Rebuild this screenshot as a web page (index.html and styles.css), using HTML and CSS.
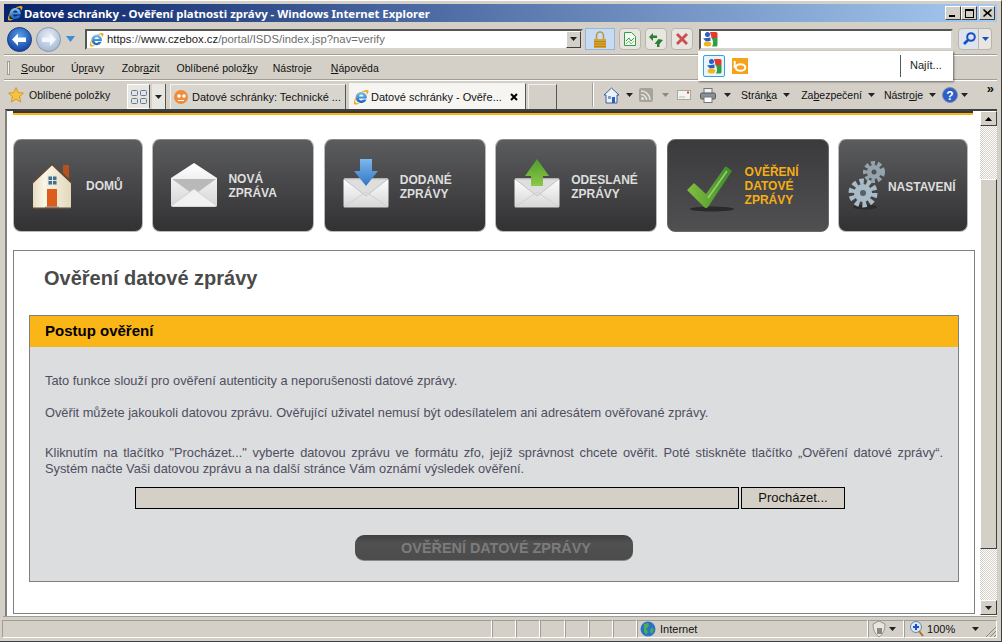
FILE: index.html
```html
<!DOCTYPE html>
<html lang="cs">
<head>
<meta charset="utf-8">
<title>Datové schránky - Ověření platnosti zprávy</title>
<link rel="stylesheet" href="styles.css">
</head>
<body>
<svg class="defs" width="0" height="0" aria-hidden="true">
  <defs>
    <linearGradient id="gIe" x1="0" y1="0" x2="0" y2="1"><stop offset="0" stop-color="#7cc4f4"/><stop offset="1" stop-color="#0f5fc0"/></linearGradient>
    <linearGradient id="gEnv" x1="0" y1="0" x2="0" y2="1"><stop offset="0" stop-color="#ffffff"/><stop offset="1" stop-color="#d6d6d6"/></linearGradient>
    <linearGradient id="gBlue" x1="0" y1="0" x2="0" y2="1"><stop offset="0" stop-color="#7db8ee"/><stop offset="1" stop-color="#2f76c4"/></linearGradient>
    <linearGradient id="gGreen" x1="0" y1="0" x2="0" y2="1"><stop offset="0" stop-color="#4e9c2c"/><stop offset="1" stop-color="#8cc84a"/></linearGradient>
    <linearGradient id="gCheck" x1="0" y1="0" x2="1" y2="0"><stop offset="0" stop-color="#82bf3e"/><stop offset="1" stop-color="#3c8c2e"/></linearGradient>
    <linearGradient id="gHouse" x1="0" y1="0" x2="1" y2="0"><stop offset="0" stop-color="#e6dcc0"/><stop offset=".3" stop-color="#faf6e6"/><stop offset="1" stop-color="#e2d8bc"/></linearGradient>
    <radialGradient id="gBack" cx=".5" cy=".35" r=".7"><stop offset="0" stop-color="#5aa0ea"/><stop offset="1" stop-color="#0a3a9c"/></radialGradient>
    <radialGradient id="gFwd" cx=".5" cy=".35" r=".7"><stop offset="0" stop-color="#e6eef8"/><stop offset="1" stop-color="#9fb4cf"/></radialGradient>
    <symbol id="ie" viewBox="0 0 16 16">
      <path d="M8.300 3C5.200 3 2.700 5.400 2.700 8.500s2.500 5.500 5.600 5.500c2.400 0 4.400-1.400 5.200-3.500h-3.300c-.4.700-1.100 1.100-1.900 1.100-1.200 0-2.200-.9-2.300-2.100h7.700c.1-.4.100-.7.100-1C13.800 5.400 11.400 3 8.300 3zM6 7.500C6.200 6.400 7.100 5.600 8.300 5.600s2.100.8 2.300 1.900z" fill="url(#gIe)"/>
      <path d="M1.200 15C.2 13 2 8 6.500 4.300 10.500 1 14.400.2 15.300 1.600c.6 1-.1 2.500-1.400 4.100.2-1.500-.3-2.700-1.900-3C9.600 2.300 7 3.600 5 6 2.800 8.600 1.800 12 2.600 13.400c.7 1.100 2.800 1 5-.2-2.700 2.300-5.400 3-6.400 1.800z" fill="#f0a820"/>
    </symbol>
    <symbol id="goog" viewBox="0 0 16 16">
      <path d="M8 1h6a1.500 1.500 0 0 1 1.500 1.500V7H9.500z" fill="#e33a2c"/>
      <path d="M9.500 7h6v7a1.500 1.500 0 0 1-1.500 1.500H10c1.500-2 1.500-6-.5-8.500z" fill="#2ea043"/>
      <circle cx="5.500" cy="3.600" r="2.500" fill="#2a5fc0"/>
      <path d="M1 7.500L8.500 6.500v3.500L4 10.500z" fill="#2a5fc0"/>
      <ellipse cx="5.500" cy="13" rx="3.800" ry="2.500" fill="#f2b61c"/>
    </symbol>
    <symbol id="env" viewBox="0 0 46 30">
      <rect x=".5" y=".5" width="45" height="29" rx="1.500" fill="url(#gEnv)"/>
      <path d="M1 1l22 17L45 1z" fill="#dedede" stroke="#c4c4c4" stroke-width="1"/>
      <path d="M1 29l22-15 22 15" fill="none" stroke="#d0d0d0" stroke-width="1"/>
    </symbol>
    <symbol id="tri" viewBox="0 0 7 4"><path d="M0 0h7L3.500 4z" fill="#222"/></symbol>
  </defs>
</svg>

<div class="window">
  <header class="titlebar">
    <svg class="ti-ie"><use href="#ie"/></svg>
    <span class="ti-text">Datové schránky - Ověření platnosti zprávy - Windows Internet Explorer</span>
    <span class="ctrls">
      <button class="ctrl" aria-label="Minimalizovat"><i class="c-min"></i></button>
      <button class="ctrl" aria-label="Maximalizovat"><i class="c-max"></i></button>
      <button class="ctrl c-gap" aria-label="Zavřít">
        <svg viewBox="0 0 9 8" width="9" height="8"><path d="M1 0l3.500 3L8 0l1 1-3 3 3 3-1 1-3.500-3L1 8 0 7l3-3-3-3z" fill="#000"/></svg>
      </button>
    </span>
  </header>

  <nav class="navbar">
    <span class="backfwd">
      <svg viewBox="0 0 25 25" width="25" height="25"><circle cx="12.500" cy="12.500" r="12" fill="url(#gBack)" stroke="#1d3f80"/><path d="M5 12.500l6-6v4h8v4.500h-8v4z" fill="#fff"/></svg>
      <svg class="fwd" viewBox="0 0 25 25" width="25" height="25"><circle cx="12.500" cy="12.500" r="12" fill="url(#gFwd)" stroke="#8a96a8"/><path d="M20 12.500l-6-6v4H6v4.500h8v4z" fill="#f4f7fb"/></svg>
    </span>
    <svg class="navdrop" viewBox="0 0 9 6" width="9" height="6"><path d="M0 0h9L4.500 6z" fill="#3a8fd0"/></svg>
    <div class="addr">
      <svg class="addr-ie"><use href="#ie"/></svg>
      <span class="url"><b>https</b>://<b>www.czebox.cz</b>/portal/ISDS/index.jsp?nav=verify</span>
      <span class="addr-dd"><svg width="7" height="4"><use href="#tri"/></svg></span>
    </div>
    <span class="lock">
      <svg viewBox="0 0 14 17" width="14" height="17"><path d="M3.500 8V4.500a3.500 3.500 0 0 1 7 0V8" fill="none" stroke="#b89a4a" stroke-width="1.600"/><rect x="1" y="8" width="12" height="9" fill="#d9a531"/><path d="M1 10.500h12M1 13h12M1 15.500h12" stroke="#a97c1d" stroke-width=".8"/></svg>
    </span>
    <span class="tbtn t1">
      <svg viewBox="0 0 12 14" width="12" height="14"><path d="M.5.500h7l4 4v9H.5z" fill="#f2fbf0" stroke="#3a9a4a"/><path d="M2 9l3-3 2 3 3-3" fill="none" stroke="#3a9a4a"/><path d="M2 12l3-3 2 3 3-3" fill="none" stroke="#8cc88c"/></svg>
    </span>
    <span class="tbtn">
      <svg viewBox="0 0 16 16" width="16" height="16"><path d="M1 6l4-4v2.500h4V7H5v3z" fill="#2d7d32"/><path d="M15 9l-3.500 4V16H9v-3H6.500l4-5z" fill="#2d7d32"/></svg>
    </span>
    <span class="tbtn">
      <svg viewBox="0 0 12 12" width="12" height="12"><path d="M2 0l4 4 4-4 2 2-4 4 4 4-2 2-4-4-4 4-2-2 4-4-4-4z" fill="#c8504e"/></svg>
    </span>
    <div class="search"><svg class="s-g"><use href="#goog"/></svg></div>
    <span class="s-btn">
      <svg viewBox="0 0 14 14" width="14" height="14"><circle cx="9" cy="5" r="3.800" fill="none" stroke="#1450c8" stroke-width="2"/><path d="M6 8l-4 4" stroke="#1450c8" stroke-width="2.600"/></svg>
    </span>
    <span class="s-arr"><svg viewBox="0 0 7 4" width="7" height="4"><path d="M0 0h7L3.500 4z" fill="#1450c8"/></svg></span>
  </nav>

  <div class="popup">
    <span class="pop-g"><svg width="16" height="16"><use href="#goog"/></svg></span>
    <span class="pop-b"><svg viewBox="0 0 16 16" width="16" height="16"><rect width="16" height="16" fill="#f7a21b"/><ellipse cx="8.500" cy="9.500" rx="4.800" ry="3.300" fill="none" stroke="#fff" stroke-width="2"/><path d="M2.700 3v7" stroke="#fff" stroke-width="2"/></svg></span>
    <span class="pop-find">Najít...</span>
  </div>

  <div class="menubar">
    <i class="grip"></i>
    <span class="m m1"><u>S</u>oubor</span>
    <span class="m m2">Úp<u>r</u>avy</span>
    <span class="m m3">Zobr<u>a</u>zit</span>
    <span class="m m4">Oblíbené polož<u>k</u>y</span>
    <span class="m m5">Nástro<u>j</u>e</span>
    <span class="m m6"><u>N</u>ápověda</span>
  </div>

  <div class="cmdbar">
    <svg class="star" viewBox="0 0 16 16" width="16" height="16"><path d="M8 .5l2.300 5 5.200.6-3.900 3.500 1.100 5.400L8 12.300 3.300 15l1.100-5.400L.5 6.100l5.200-.6z" fill="#f7c23c" stroke="#c98a10" stroke-width=".7"/></svg>
    <span class="fav">Oblíbené položky</span>
    <span class="qt"><svg viewBox="0 0 16 14" width="16" height="14"><g fill="#dfe3ea" stroke="#6a7a90"><rect x=".5" y=".5" width="6" height="5" rx="1"/><rect x="9.500" y=".5" width="6" height="5" rx="1"/><rect x=".5" y="8.500" width="6" height="5" rx="1"/><rect x="9.500" y="8.500" width="6" height="5" rx="1"/></g></svg></span>
    <span class="qd"><svg width="7" height="4"><use href="#tri"/></svg></span>
    <span class="tab">
      <svg viewBox="0 0 14 14" width="14" height="14"><circle cx="7" cy="7" r="7" fill="#ee8c3a"/><circle cx="5" cy="6" r="1.800" fill="#fff"/><circle cx="10" cy="6" r="1.800" fill="#fff"/><path d="M4 10.500h6" stroke="#fff"/></svg>
      <span>Datové schránky: Technické ...</span>
    </span>
    <span class="tab tab-on">
      <svg width="16" height="16"><use href="#ie"/></svg>
      <span>Datové schránky - Ověře...</span>
      <svg class="tabx" viewBox="0 0 8 8" width="8" height="8"><path d="M1 1l6 6M7 1L1 7" stroke="#000" stroke-width="2"/></svg>
    </span>
    <span class="tabnew"></span>
    <i class="sep"></i>
    <svg class="c-home" viewBox="0 0 17 17" width="17" height="17"><path d="M8.500 1L1 8h2v8h11V8h2z" fill="#eef2f8" stroke="#3a5fa0"/><rect x="9" y="10" width="3" height="6" fill="#2a5fc0"/><rect x="5" y="9" width="3" height="3" fill="#7aa0d0"/></svg>
    <svg class="c-a1" width="7" height="4"><use href="#tri"/></svg>
    <svg class="c-rss" viewBox="0 0 14 14" width="14" height="14"><rect width="14" height="14" rx="2" fill="#a6a39a"/><circle cx="3.500" cy="10.500" r="1.500" fill="#e4e2dc"/><path d="M2 6.500a5.500 5.500 0 0 1 5.500 5.500M2 3a9 9 0 0 1 9 9" fill="none" stroke="#e4e2dc" stroke-width="1.600"/></svg>
    <svg class="c-a2" viewBox="0 0 7 4" width="7" height="4"><path d="M0 0h7L3.500 4z" fill="#8a8880"/></svg>
    <svg class="c-mail" viewBox="0 0 14 10" width="14" height="10"><rect x=".5" y=".5" width="13" height="9" fill="#f4f3f0" stroke="#a8a69e"/><rect x="10" y="1.500" width="2" height="2" fill="#d04040"/><path d="M2 7h6" stroke="#bbb"/></svg>
    <svg class="c-print" viewBox="0 0 16 15" width="16" height="15"><rect x="4" y=".5" width="8" height="5" fill="#f2f2f2" stroke="#777"/><rect x=".5" y="5" width="15" height="6" rx="1.500" fill="#8a9098" stroke="#555"/><rect x="4" y="9" width="8" height="5.500" fill="#fff" stroke="#777"/></svg>
    <svg class="c-a3" width="7" height="4"><use href="#tri"/></svg>
    <span class="c-t t-a">Strán<u>k</u>a</span><svg class="c-a4" width="7" height="4"><use href="#tri"/></svg>
    <span class="c-t t-b">Za<u>b</u>ezpečení</span><svg class="c-a4" width="7" height="4"><use href="#tri"/></svg>
    <span class="c-t t-c">Nástr<u>o</u>je</span><svg class="c-a4" width="7" height="4"><use href="#tri"/></svg>
    <svg class="c-help" viewBox="0 0 16 16" width="16" height="16"><circle cx="8" cy="8" r="7.500" fill="#2e5fc8" stroke="#7f8da8"/><text x="8" y="12.500" text-anchor="middle" class="helpq">?</text></svg>
    <svg class="c-a5" width="7" height="4"><use href="#tri"/></svg>
    <span class="more">&raquo;</span>
  </div>

  <div class="mainrow">
    <main class="view">
      <div class="strip"></div>
      <div class="btnrow">
        <a class="nb nb-s">
          <svg class="ic-home" viewBox="0 0 44 48" width="44" height="48">
            <rect x="33" y="4" width="6" height="13" fill="#b9501f"/>
            <path d="M3 21L22 3l19 18v27H3z" fill="url(#gHouse)"/>
            <path d="M2 22L22 3l20 19" fill="none" stroke="#5d4a3a" stroke-width="2"/>
            <rect x="18" y="15" width="9" height="9" fill="#3e6f93" stroke="#e9e4d4"/>
            <path d="M22.500 15v9M18 19.500h9" stroke="#e9e4d4"/>
            <rect x="17" y="28" width="10" height="18" fill="#dc5d1e"/>
            <rect x="15" y="45.500" width="14" height="1.500" fill="#a8a8a8"/>
            <rect x="3" y="46.500" width="38" height="1.500" fill="#5b4b3a"/>
          </svg>
          <span class="nt nt-home">DOMŮ</span>
        </a>
        <a class="nb nb-l">
          <svg class="ic-new" viewBox="0 0 46 44" width="46" height="44">
            <path d="M0 15L23 0l23 15v27a2 2 0 0 1-2 2H2a2 2 0 0 1-2-2z" fill="url(#gEnv)"/>
            <path d="M1 16h44L23 32z" fill="#b9b9b9"/>
            <path d="M0 43l23-17 23 17" fill="#f1f1f1" stroke="#d2d2d2"/>
          </svg>
          <span class="nt nt-new">NOVÁ<br>ZPRÁVA</span>
        </a>
        <a class="nb nb-l">
          <span class="ic-stack">
            <svg class="env" width="46" height="30"><use href="#env"/></svg>
            <svg class="arr" viewBox="0 0 24 27" width="24" height="27"><path d="M6 0h12v12h6L12 27 0 12h6z" fill="url(#gBlue)"/></svg>
          </span>
          <span class="nt nt-rec">DODANÉ<br>ZPRÁVY</span>
        </a>
        <a class="nb nb-l">
          <span class="ic-stack">
            <svg class="env" width="46" height="30"><use href="#env"/></svg>
            <svg class="arr" viewBox="0 0 24 27" width="24" height="27"><path d="M12 0l12 17h-6v10H6V17H0z" fill="url(#gGreen)"/></svg>
          </span>
          <span class="nt nt-sent">ODESLANÉ<br>ZPRÁVY</span>
        </a>
        <a class="nb nb-l nb-on">
          <svg class="ic-check" viewBox="0 0 50 46" width="50" height="46">
            <ellipse cx="25" cy="43" rx="22" ry="2.500" fill="#2a2a2a"/>
            <path d="M0 24l7-7 12 11L38 1q1-1 2 0l5 4-24 36q-2 2-4 0z" fill="url(#gCheck)"/>
            <path d="M21 32L40 5" stroke="#9ccf70" stroke-width="1.500"/>
          </svg>
          <span class="nt nt-ver">OVĚŘENÍ<br>DATOVÉ<br>ZPRÁVY</span>
        </a>
        <a class="nb nb-s">
          <svg class="ic-gear" viewBox="0 0 38 50" width="38" height="50">
            <ellipse cx="17" cy="47" rx="12" ry="2.500" fill="#2b2b2b"/>
            <circle cx="15" cy="33" r="11" fill="none" stroke="#a9bbc6" stroke-width="7" stroke-dasharray="4 2.900"/>
            <circle cx="15" cy="33" r="9" fill="#a9bbc6"/><circle cx="15" cy="33" r="3" fill="#566068"/>
            <circle cx="26" cy="12" r="8" fill="none" stroke="#95a4ac" stroke-width="6" stroke-dasharray="3.500 2.300"/>
            <circle cx="26" cy="12" r="7" fill="#95a4ac"/><circle cx="26" cy="12" r="2.500" fill="#4e5458"/>
          </svg>
          <span class="nt nt-set">NASTAVENÍ</span>
        </a>
      </div>
      <section class="box">
        <h1>Ověření datové zprávy</h1>
        <div class="panel">
          <h2>Postup ověření</h2>
          <div class="pbody">
            <p class="p1">Tato funkce slouží pro ověření autenticity a neporušenosti datové zprávy.</p>
            <p class="p2">Ověřit můžete jakoukoli datovou zprávu. Ověřující uživatel nemusí být odesílatelem ani adresátem ověřované zprávy.</p>
            <p class="p3">Kliknutím na tlačítko "Procházet..." vyberte datovou zprávu ve formátu zfo, jejíž správnost chcete ověřit. Poté stiskněte tlačítko „Ověření datové zprávy“. Systém načte Vaši datovou zprávu a na další stránce Vám oznámí výsledek ověření.</p>
            <div class="filerow"><span class="filein"></span><span class="filebtn">Procházet...</span></div>
            <div class="subrow"><span class="submit">OVĚŘENÍ DATOVÉ ZPRÁVY</span></div>
          </div>
        </div>
      </section>
    </main>
    <aside class="sbar">
      <span class="sb-btn"><svg width="7" height="4" viewBox="0 0 7 4"><path d="M3.500 0L7 4H0z" fill="#000"/></svg></span>
      <span class="sb-track"></span>
      <span class="sb-thumb"></span>
      <span class="sb-track2"></span>
      <span class="sb-btn"><svg width="7" height="4"><use href="#tri"/></svg></span>
    </aside>
  </div>

  <footer class="status">
    <span class="st st-main"></span>
    <span class="st st-s"></span><span class="st st-s"></span><span class="st st-s"></span><span class="st st-s"></span><span class="st st-s"></span><span class="st st-s"></span>
    <span class="st st-zone">
      <svg viewBox="0 0 16 16" width="16" height="16"><circle cx="8" cy="8" r="7.500" fill="#2a72c8"/><path d="M4 3l4-1 1 3-3 3 2 3-2 3-2-4zM11 7l3 1-2 5-2-2z" fill="#4cae4c"/></svg>
      <span>Internet</span>
    </span>
    <span class="st st-sec">
      <svg viewBox="0 0 14 18" width="14" height="18"><path d="M7 1l6 3c0 6-2 10-6 13C3 14 1 10 1 4z" fill="#e8e6e0" stroke="#98958c"/><rect x="5" y="8" width="5" height="6" fill="#8a8880"/></svg>
      <svg width="7" height="4"><use href="#tri"/></svg>
    </span>
    <span class="st st-zoom">
      <svg viewBox="0 0 14 16" width="14" height="16"><circle cx="6" cy="6" r="5.500" fill="#d9e8f8" stroke="#6a86a8"/><path d="M6 3v6M3 6h6" stroke="#1a50c0" stroke-width="2"/><path d="M9 10l4 5" stroke="#b07020" stroke-width="2"/></svg>
      <span>100%</span>
      <svg class="z-a" width="7" height="4"><use href="#tri"/></svg>
    </span>
    <svg class="grip2" viewBox="0 0 12 12" width="12" height="12"><path d="M11 1L1 11M11 5l-6 6M11 9l-2 2" stroke="#8a887f"/></svg>
  </footer>
</div>
</body>
</html>
```
FILE: styles.css
```css
* { box-sizing: border-box; }
html, body { margin: 0; padding: 0; }
body { width: 1002px; height: 642px; overflow: hidden; background: #d4d0c8; font-family: "Liberation Sans", "Noto Sans", sans-serif; font-size: 11px; color: #111; }
.defs { position: absolute; }
svg { display: block; flex: none; }
.window { position: relative; width: 1002px; height: 642px; padding: 4px 4px 3px; display: flex; flex-direction: column; border-top: 1px solid #fff; border-bottom: 1px solid #404040; border-right: 1px solid #404040; }

.titlebar { height: 18px; margin-top: -1px; flex: none; display: flex; align-items: center; background: linear-gradient(90deg, #0a246a, #a6caf0); color: #fff; padding-right: 2px; }
.ti-ie { width: 16px; height: 16px; margin-left: 3px; }
.ti-text { margin-left: 1px; font: bold 11.4px "Noto Sans", sans-serif; white-space: nowrap; }
.ctrls { margin-left: auto; display: flex; }
.ctrl { width: 16px; height: 14px; padding: 0; background: #d4d0c8; border: 1px solid; border-color: #fff #404040 #404040 #fff; display: flex; align-items: center; justify-content: center; position: relative; }
.c-gap { margin-left: 2px; }
.c-min { width: 6px; height: 2px; background: #000; margin-top: 6px; margin-right: 2px; }
.c-max { width: 9px; height: 9px; border: 1px solid #000; border-top-width: 2px; }

.navbar { height: 33px; flex: none; display: flex; align-items: center; padding-top: 2px; border-bottom: 1px solid #a09d94; box-shadow: 0 1px 0 #fff; }
.backfwd { display: flex; margin-left: 3px; gap: 4px; }
.navdrop { margin-left: 5px; }
.addr { width: 498px; height: 21px; margin-left: 10px; background: #fff; border: 2px solid; border-color: #555 #d8d5ce #d8d5ce #555; display: flex; align-items: center; }
.addr-ie { width: 15px; height: 15px; margin-left: 2px; }
.url { margin-left: 3px; font-size: 11.3px; color: #6d6d6d; white-space: nowrap; }
.url b { font-weight: 400; color: #222; }
.addr-dd { margin-left: auto; width: 15px; height: 17px; background: #d4d0c8; border: 1px solid; border-color: #fff #404040 #404040 #fff; display: flex; align-items: center; justify-content: center; }
.lock { width: 30px; height: 22px; margin-left: 2px; background: #c7dcf2; border: 1px solid #9ab6d4; display: flex; align-items: center; justify-content: center; }
.tbtn { width: 22px; height: 22px; margin-left: 4px; background: #e8e6e0; border: 1px solid #b7b5ae; border-radius: 4px; display: flex; align-items: center; justify-content: center; }
.t1 { margin-left: 4px; }
.search { width: 254px; height: 21px; margin-left: 6px; background: #fff; border: 2px solid; border-color: #555 #d8d5ce #d8d5ce #555; display: flex; align-items: center; }
.s-g { width: 16px; height: 16px; margin-left: 1px; }
.s-btn { width: 21px; height: 22px; margin-left: 5px; background: #dfe4ec; border: 1px solid #b7b5ae; border-radius: 4px 0 0 4px; display: flex; align-items: center; justify-content: center; }
.s-arr { width: 13px; height: 22px; background: #e8e6e0; border: 1px solid #b7b5ae; border-left: 0; border-radius: 0 4px 4px 0; display: flex; align-items: center; justify-content: center; }

.popup { position: absolute; left: 698px; top: 50px; width: 255px; height: 30px; background: #fff; box-shadow: 1px 1px 2px rgba(0,0,0,.5); display: flex; align-items: center; z-index: 3; }
.pop-g { width: 22px; height: 22px; margin-left: 5px; border: 1px solid #3aa0dc; border-radius: 2px; display: flex; align-items: center; justify-content: center; background: #e8f4fc; }
.pop-b { margin-left: 7px; }
.pop-find { margin-left: auto; width: 53px; padding-left: 9px; border-left: 1px solid #555; height: 22px; line-height: 21px; color: #222; }

.menubar { height: 24px; flex: none; display: flex; align-items: center; border-bottom: 1px solid #a09d94; box-shadow: 0 1px 0 #fff; margin-top: 1px; font-size: 10.5px; }
.grip { width: 3px; height: 14px; margin-left: 3px; background: #f4f3f0; border: 1px solid #a09d94; }
.m { white-space: nowrap; color: #111; }
.m1 { margin-left: 11px; }
.m2 { margin-left: 16px; }
.m3 { margin-left: 17.5px; }
.m4 { margin-left: 17px; }
.m5 { margin-left: 15px; }
.m6 { margin-left: 19px; }

.cmdbar { height: 28px; flex: none; display: flex; align-items: center; margin-top: 1px; }
.star { margin-left: 4px; }
.fav { margin-left: 5px; width: 98px; white-space: nowrap; font-size: 10.5px; }
.qt { width: 23px; height: 25px; background: #e8e6e0; border: 1px solid #fff; border-right: 1px solid #555; display: flex; align-items: center; justify-content: center; align-self: flex-end; }
.qd { width: 14px; height: 25px; margin-left: 2px; background: #e8e6e0; border-right: 1px solid #555; display: flex; align-items: center; justify-content: center; align-self: flex-end; }
.tab { width: 176px; height: 25px; margin-left: 4px; align-self: flex-end; background: #d8d5ce; border: 1px solid #f4f3f0; border-right: 1px solid #555; border-bottom: 0; display: flex; align-items: center; gap: 4px; padding-left: 3px; white-space: nowrap; }
.tab-on { margin-left: 3px; width: 177px; background: #f6f5f2; height: 26px; gap: 2px; padding-left: 3px; }
.tabx { margin-left: auto; margin-right: 7px; }
.tabnew { width: 29px; height: 25px; margin-left: 2px; align-self: flex-end; border: 1px solid #f0efeb; border-right: 1px solid #555; border-bottom: 0; }
.sep { width: 2px; height: 24px; margin-left: 35px; background: #a09d94; border-right: 1px solid #fff; }
.c-home { margin-left: 9px; }
.c-a1 { margin-left: 6px; }
.c-rss { margin-left: 6px; }
.c-a2 { margin-left: 9px; }
.c-mail { margin-left: 8px; }
.c-print { margin-left: 9px; }
.c-a3 { margin-left: 8px; }
.c-t { white-space: nowrap; font-size: 10.5px; }
.t-a { margin-left: 10px; }
.t-b { margin-left: 11px; }
.t-c { margin-left: 9px; }
.c-a4 { margin-left: 6px; }
.c-help { margin-left: 6px; }
.helpq { font: bold 12px "Liberation Sans", sans-serif; fill: #fff; }
.c-a5 { margin-left: 3px; }
.more { margin-left: auto; margin-right: 3px; margin-top: -14px; font-size: 13px; font-weight: 700; line-height: 1; }

.mainrow { flex: 1; min-height: 0; display: flex; background: #fff; margin-top: 0; border-top: 2px solid #404040; border-left: 2px solid #808080; margin-left: 1px; }
.view { width: 973px; flex: none; background: #fff; padding: 0 5px 2px 6px; display: flex; flex-direction: column; overflow: hidden; }
.strip { height: 4px; margin-right: 2px; flex: none; background: #fab616; border-top: 2px solid #383838; }
.btnrow { display: grid; grid-template-columns: 130px 162px 162px 162px 162px 130px; column-gap: 9.4px; margin-top: 24px; flex: none; }
.nb { height: 93px; border-radius: 8px; border: 1px solid #b8b8b8; border-top-color: #8a8a8a; background: linear-gradient(#5b5c5e, #323133); display: flex; align-items: center; color: #dedede; font: bold 12px/14px "Liberation Sans", sans-serif; }
.nb-on { background: linear-gradient(#3b3a3c, #505052); color: #f5ae14; border-color: #6a6a6a; }
.ic-home { margin-left: 16px; margin-top: -1px; }
.nt-home { margin-left: 12px; }
.ic-new { margin-left: 18px; margin-top: -2px; }
.nt-new { margin-left: 11px; }
.ic-stack { position: relative; width: 46px; height: 49px; margin-left: 18px; margin-top: -4px; }
.env { position: absolute; left: 0; bottom: 0; }
.arr { position: absolute; left: 11px; top: 0; }
.nt-rec { margin-left: 11px; margin-top: 3px; }
.nt-sent { margin-left: 11px; margin-top: 3px; }
.ic-check { margin-left: 19px; margin-top: 6px; }
.nt-ver { margin-left: 8px; margin-top: 1px; }
.ic-gear { margin-left: 9px; margin-top: -1px; }
.nt-set { margin-left: 2px; margin-top: 2px; }

.box { margin-top: 18px; width: 962px; flex: 1; min-height: 0; border: 1px solid #808080; padding: 0 15px; }
.box h1 { margin: 15px 0 0 15px; font: bold 20px/24px "Liberation Sans", sans-serif; color: #4a4a4a; }
.panel { margin-top: 25px; width: 930px; height: 267px; border: 1px solid #808080; background: #dcdddf; }
.panel h2 { margin: 0; height: 31px; padding-left: 15px; background: #fab616; color: #000; font: bold 15px/30px "Liberation Sans", sans-serif; }
.pbody { padding: 0 15px; color: #4e4e60; font: 12.8px/16px "Liberation Sans", sans-serif; }
.pbody p { margin: 0; }
.p1 { padding-top: 26px; }
.p2 { padding-top: 16px; }
.p3 { padding-top: 24px; text-align: justify; }
.filerow { display: flex; margin: 10px 0 0 90px; gap: 2px; }
.filein { width: 604px; height: 22px; background: #d4d0c8; border: 1px solid #000; }
.filebtn { width: 104px; height: 22px; background: #d4d0c8; border: 1px solid #000; color: #111; font-size: 13px; line-height: 20px; text-align: center; }
.subrow { display: flex; margin: 26px 0 0 310px; }
.submit { width: 278px; height: 26px; padding-left: 4px; border-radius: 9px; background: linear-gradient(#3f3f3f, #505050 30%, #4c4c4c); color: #7c7c7c; font: bold 14.4px/26px "Liberation Sans", sans-serif; text-align: center; border-bottom: 1px solid #8a8a8a; }

.sbar { width: 17px; flex: none; display: flex; flex-direction: column; margin-bottom: 1px; }
.sb-btn { height: 15px; flex: none; background: #d4d0c8; border: 1px solid; border-color: #fff #404040 #404040 #fff; display: flex; align-items: center; justify-content: center; }
.sb-track { height: 53px; flex: none; background: repeating-conic-gradient(#d4d0c8 0 25%, #fff 0 50%) 0 0 / 2px 2px; }
.sb-thumb { height: 370px; flex: none; background: #d4d0c8; border: 1px solid; border-color: #fff #404040 #404040 #fff; }
.sb-track2 { flex: 1; background: repeating-conic-gradient(#d4d0c8 0 25%, #fff 0 50%) 0 0 / 2px 2px; }

.status { height: 22px; flex: none; display: flex; align-items: center; padding-top: 3px; border-top: 1px solid #a09d94; margin-left: -1px; }
.st { height: 18px; border: 1px solid; border-color: #a09d94 #fff #fff #a09d94; display: flex; align-items: center; }
.st-main { width: 490px; margin-left: -1px; }
.st-s { width: 24.2px; }
.st-zone { width: 231px; gap: 4px; padding-left: 2px; }
.st-sec { width: 36px; gap: 3px; padding-left: 3px; }
.st-zoom { width: 93px; padding-left: 5px; gap: 3px; }
.z-a { margin-left: 14px; }
.grip2 { margin-left: -12px; margin-top: 5px; }
```
